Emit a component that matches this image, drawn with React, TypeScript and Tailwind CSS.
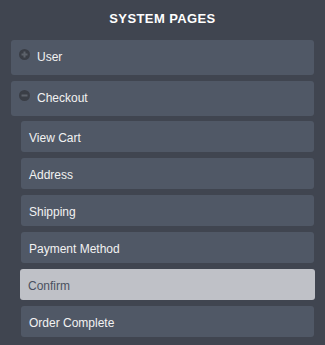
import React from 'react'

const SUB_PAGES = ['View Cart', 'Address', 'Shipping', 'Payment Method', 'Confirm', 'Order Complete']
const ACTIVE = 'Confirm'

function SignIcon({ minus }: { minus?: boolean }) {
  return (
    <svg width="11" height="11" viewBox="0 0 11 11" className="shrink-0">
      <circle cx="5.5" cy="5.5" r="5.5" fill="#3a3e46" />
      <rect x="2.5" y="4.5" width="6" height="2" fill="#5d626b" />
      {!minus && <rect x="4.5" y="2.5" width="2" height="6" fill="#5d626b" />}
    </svg>
  )
}

function GroupRow({ label, open }: { label: string; open?: boolean }) {
  return (
    <div className="flex items-start gap-[7px] rounded-[3px] bg-[#505866] py-[10px] pl-[8px] text-[12px] leading-[15px] text-[#f2f2f2]">
      <span className="pt-[-1px] -mt-[1px]">
        <SignIcon minus={open} />
      </span>
      <span>{label}</span>
    </div>
  )
}

export default function App() {
  return (
    <div
      className="h-[345px] w-[325px] bg-[#404550] px-[11px]"
      style={{ fontFamily: '"Liberation Sans", Arial, sans-serif' }}
    >
      <h2 className="pb-[13px] pt-[11px] text-center text-[13px] font-bold leading-[16px] tracking-[0.4px] text-white">
        SYSTEM PAGES
      </h2>
      <div className="flex flex-col gap-[6px]">
        <GroupRow label="User" />
        <GroupRow label="Checkout" open />
      </div>
      <div className="mt-[5px] flex flex-col gap-[6px] pl-[10px]">
        {SUB_PAGES.map((p) =>
          p === ACTIVE ? (
            <div
              key={p}
              className="-mx-px rounded-[3px] bg-[#bfc1c7] pb-[6px] pl-[8px] pt-[10px] text-[12px] leading-[15px] text-[#4b5160]"
            >
              {p}
            </div>
          ) : (
            <div
              key={p}
              className="rounded-[3px] bg-[#505866] pb-[6px] pl-[8px] pt-[10px] text-[12px] leading-[15px] text-[#f2f2f2]"
            >
              {p}
            </div>
          )
        )}
      </div>
    </div>
  )
}
